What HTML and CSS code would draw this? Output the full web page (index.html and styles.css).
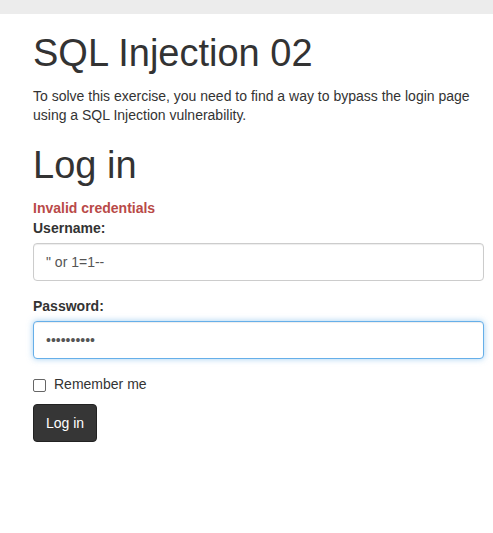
FILE: index.html
```html
<!DOCTYPE html>
<html lang="en">
<head>
<meta charset="utf-8">
<title>SQL Injection 02</title>
<link rel="stylesheet" href="styles.css">
</head>
<body>
<div class="topbar"></div>
<main class="container">
  <h1 class="title">SQL Injection 02</h1>
  <p class="intro">To solve this exercise, you need to find a way to bypass the login page using a SQL Injection vulnerability.</p>
  <h2 class="title title-sub">Log in</h2>
  <form class="login">
    <div class="error">Invalid credentials</div>
    <div class="group">
      <label class="label" for="user">Username:</label>
      <input class="field" id="user" type="text" value="&quot; or 1=1--">
    </div>
    <div class="group">
      <label class="label" for="pass">Password:</label>
      <input class="field focused" id="pass" type="password" value="1234567890">
    </div>
    <label class="check"><span class="box"></span><span>Remember me</span></label>
    <button class="btn" type="button">Log in</button>
  </form>
</main>
</body>
</html>
```
FILE: styles.css
```css
html, body {
  margin: 0;
  padding: 0;
  background: #fff;
}
body {
  font-family: "Liberation Sans", Arial, sans-serif;
  font-size: 14px;
  line-height: 20px;
  color: #333;
}
.topbar {
  height: 14px;
  background: #ececec;
}
.container {
  padding: 0 9px 0 33px;
  display: flex;
  flex-direction: column;
}
.title {
  font-size: 38px;
  font-weight: 500;
  line-height: 40px;
  margin: 19px 0 0;
  color: #333;
}
.title-sub {
  margin-top: 20px;
}
.intro {
  margin: 14px 0 0;
  line-height: 19px;
}
.login {
  display: flex;
  flex-direction: column;
  margin-top: 13px;
}
.error {
  color: #b94a48;
  font-weight: bold;
}
.group {
  display: flex;
  flex-direction: column;
  margin-bottom: 15px;
}
.label {
  font-weight: bold;
  margin: 0 0 5px;
}
.field {
  box-sizing: border-box;
  height: 38px;
  padding: 6px 12px;
  font-family: "Liberation Sans", Arial, sans-serif;
  font-size: 14px;
  color: #555;
  border: 1px solid #ccc;
  border-radius: 4px;
  background: #fff;
  box-shadow: inset 0 1px 1px rgba(0,0,0,0.075);
  outline: none;
  width: 100%;
}
.field.focused {
  border-color: #66afe9;
  box-shadow: inset 0 1px 1px rgba(0,0,0,0.075), 0 0 6px rgba(102,175,233,0.6);
}
.check {
  display: flex;
  align-items: flex-start;
  gap: 8px;
  margin: 0 0 10px;
  height: 20px;
}
.box {
  box-sizing: border-box;
  width: 13px;
  height: 13px;
  margin-top: 5px;
  border: 1px solid #666;
  border-radius: 2px;
  background: #fff;
}
.btn {
  align-self: flex-start;
  box-sizing: border-box;
  height: 38px;
  padding: 0 12px;
  font-family: "Liberation Sans", Arial, sans-serif;
  font-size: 14px;
  color: #fff;
  background: #363636;
  border: 1px solid #222;
  border-radius: 4px;
}
```
